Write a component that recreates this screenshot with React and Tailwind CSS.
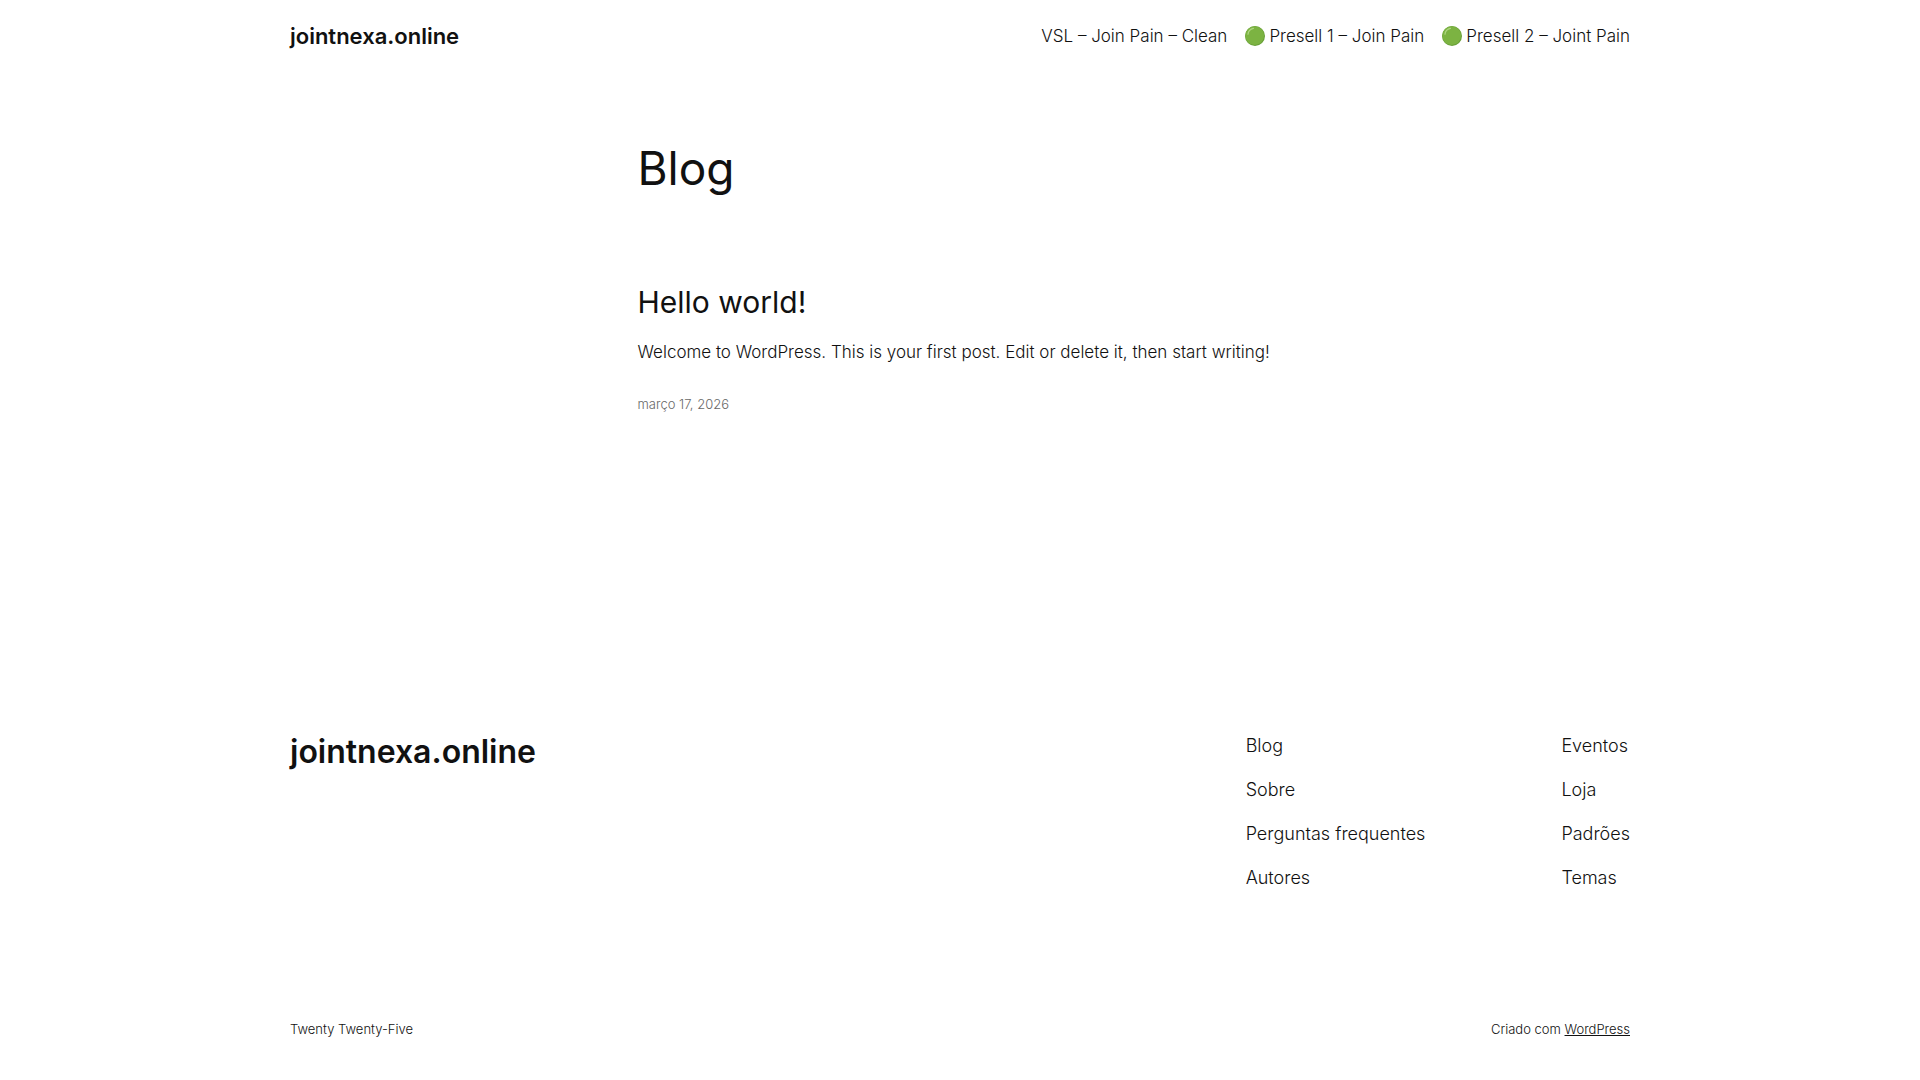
const navItems = [
  { label: 'VSL – Join Pain – Clean', dot: false },
  { label: 'Presell 1 – Join Pain', dot: true },
  { label: 'Presell 2 – Joint Pain', dot: true },
];

const footerColumns = [
  ['Blog', 'Sobre', 'Perguntas frequentes', 'Autores'],
  ['Eventos', 'Loja', 'Padrões', 'Temas'],
];

function GreenDot() {
  return (
    <svg className="size-5 shrink-0" viewBox="0 0 20 20" aria-hidden="true">
      <circle cx="10" cy="10" r="10" fill="#689f38" />
      <circle cx="9.7" cy="9.6" r="9.4" fill="#7cb342" />
      <path d="M3 8.2C3.3 5.4 5.6 3 8.4 2.4" fill="none" stroke="#aed581" strokeWidth="1.3" strokeLinecap="round" />
    </svg>
  );
}

function Header() {
  return (
    <header className="mx-auto flex w-full max-w-[1340px] items-center justify-between py-5">
      <a href="#" className="text-[22px] leading-8 font-semibold">jointnexa.online</a>
      <nav aria-label="Principal">
        <ul className="flex gap-[18px]">
          {navItems.map((item) => (
            <li key={item.label}>
              <a href="#" className="flex items-center gap-1 leading-8">
                {item.dot && <GreenDot />}
                {item.label}
              </a>
            </li>
          ))}
        </ul>
      </nav>
    </header>
  );
}

function Footer() {
  return (
    <footer className="mx-auto w-full max-w-[1340px] pb-9">
      <div className="flex items-start justify-between">
        <a href="#" className="text-[32px] leading-10 font-semibold">jointnexa.online</a>
        <div className="flex gap-[136px] text-lg">
          {footerColumns.map((column) => (
            <ul key={column[0]} className="flex flex-col gap-4">
              {column.map((label) => (
                <li key={label} className="leading-7">
                  <a href="#">{label}</a>
                </li>
              ))}
            </ul>
          ))}
        </div>
      </div>
      <div className="mt-[127px] flex justify-between text-[13px] leading-5">
        <p>Twenty Twenty-Five</p>
        <p>
          Criado com <a href="#" className="underline">WordPress</a>
        </p>
      </div>
    </footer>
  );
}

export default function App() {
  return (
    <div className="min-h-screen bg-white font-['Inter',sans-serif] text-[17px] font-light text-[#111111]">
      <Header />
      <main className="mx-auto w-full max-w-[645px] pt-[68px] pb-[318px]">
        <h1 className="text-[46px] leading-14 font-normal">Blog</h1>
        <article className="mt-[86px]">
          <h2 className="text-[30px] leading-10 font-normal">
            <a href="#">Hello world!</a>
          </h2>
          <p className="mt-4 leading-7">
            Welcome to WordPress. This is your first post. Edit or delete it, then start writing!
          </p>
          <time dateTime="2026-03-17" className="mt-7 block text-[13px] leading-5 text-[#686868]">
            março 17, 2026
          </time>
        </article>
      </main>
      <Footer />
    </div>
  );
}
